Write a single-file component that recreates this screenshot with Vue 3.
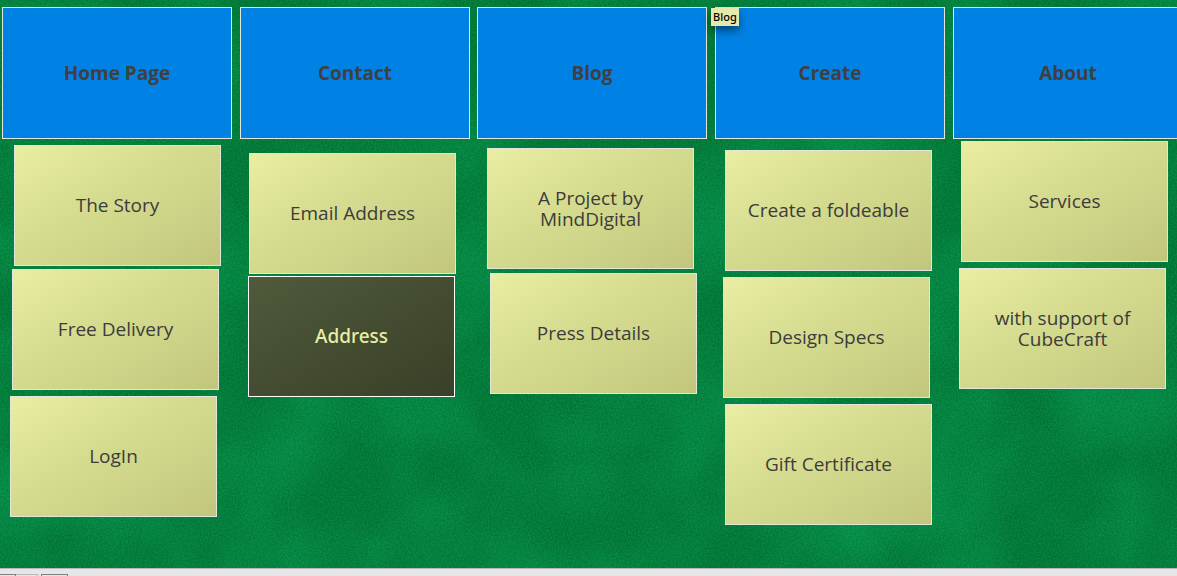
<script setup>
const groups = [
  { title: 'Home Page', x: 2, y: 7 },
  { title: 'Contact', x: 240, y: 7 },
  { title: 'Blog', x: 477, y: 7 },
  { title: 'Create', x: 715, y: 7 },
  { title: 'About', x: 953, y: 7 },
]

const cards = [
  { text: 'The Story', x: 14, y: 145 },
  { text: 'Free Delivery', x: 12, y: 269 },
  { text: 'LogIn', x: 10, y: 396 },
  { text: 'Email Address', x: 249, y: 153 },
  { text: 'Address', x: 248, y: 276, selected: true },
  { text: 'A Project by MindDigital', x: 487, y: 148 },
  { text: 'Press Details', x: 490, y: 273 },
  { text: 'Create a foldeable', x: 725, y: 150 },
  { text: 'Design Specs', x: 723, y: 277 },
  { text: 'Gift Certificate', x: 725, y: 404 },
  { text: 'Services', x: 961, y: 141 },
  { text: 'with support of CubeCraft', x: 959, y: 268 },
]

const place = (item) => ({ left: item.x + 'px', top: item.y + 'px' })
</script>

<template>
  <div class="page">
    <main class="table">
      <svg class="felt" aria-hidden="true">
        <filter id="clouds" x="0" y="0" width="100%" height="100%" color-interpolation-filters="sRGB">
          <feTurbulence type="fractalNoise" baseFrequency="0.009" numOctaves="3" seed="8" />
          <feColorMatrix values="0 0 0 0 0.02  0 0 0 0 0.6  0 0 0 0 0.31  1.5 0 0 0 -0.5" />
        </filter>
        <filter id="grain" x="0" y="0" width="100%" height="100%" color-interpolation-filters="sRGB">
          <feTurbulence type="fractalNoise" baseFrequency="0.6" numOctaves="2" seed="3" />
          <feColorMatrix values="0.5 0 0 0 -0.17  0.8 0 0 0 0.1  0.6 0 0 0 -0.05  0 0 0 0 0.18" />
        </filter>
        <rect width="100%" height="100%" fill="#007838" />
        <rect width="100%" height="100%" filter="url(#clouds)" />
        <rect width="100%" height="100%" filter="url(#grain)" />
      </svg>

      <h2 v-for="group in groups" :key="group.title" class="note group" :style="place(group)">
        {{ group.title }}
      </h2>
      <div
        v-for="card in cards"
        :key="card.text"
        class="note card"
        :class="{ selected: card.selected }"
        :style="place(card)"
      >
        <span>{{ card.text }}</span>
      </div>
      <div class="tooltip" role="tooltip">Blog</div>
    </main>
    <footer class="bar">
      <span class="tab first"></span>
      <span class="tab light"></span>
      <span class="tab last"></span>
    </footer>
  </div>
</template>

<style>
body {
  margin: 0;
}
</style>

<style scoped>
.page {
  display: flex;
  flex-direction: column;
  height: 100vh;
  overflow: hidden;
  font-family: "Open Sans", "Noto Sans", sans-serif;
  color: #3c3c3c;
}
.table {
  position: relative;
  flex: 1;
  overflow: hidden;
  background: #007f3c;
}
.felt {
  display: block;
  width: 100%;
  height: 100%;
}
.note {
  position: absolute;
  box-sizing: border-box;
  display: flex;
  align-items: center;
  justify-content: center;
  margin: 0;
  border: 1px solid #e2e6dc;
  font-size: 19px;
  line-height: 21px;
  text-align: center;
}
.group {
  width: 230px;
  height: 132px;
  background: #0082e4;
  color: #404040;
  font-weight: 700;
}
.card {
  width: 207px;
  height: 121px;
  padding: 0 20px;
  background: linear-gradient(150deg, #e9eea2 0%, #d5db8e 45%, #cad085 75%, #c1c67c 100%);
}
.card.selected {
  border-color: #fff;
  background: linear-gradient(150deg, #505a3b, #384027);
  color: #e9eea2;
  font-family: "Noto Sans", sans-serif;
  font-weight: 500;
}
.tooltip {
  position: absolute;
  left: 711px;
  top: 8px;
  padding: 0 2px;
  background: #e7e9ab;
  box-shadow: 0 5px 9px rgba(0, 0, 0, 0.45);
  color: #000;
  font-family: "Noto Sans", sans-serif;
  font-size: 11px;
  font-weight: 500;
  line-height: 18px;
}
.bar {
  display: flex;
  align-items: flex-end;
  box-sizing: border-box;
  height: 8px;
  border-top: 1px solid #b8b8b8;
  background: #e6e6e6;
}
.tab {
  box-sizing: border-box;
  height: 2px;
  border: 1px solid #808080;
  border-bottom: 0;
}
.first {
  width: 16px;
  border-left: 0;
}
.light {
  width: 22px;
  border-color: #b8b8b8;
  border-left: 0;
}
.last {
  width: 27px;
  margin-left: 3px;
}
</style>
